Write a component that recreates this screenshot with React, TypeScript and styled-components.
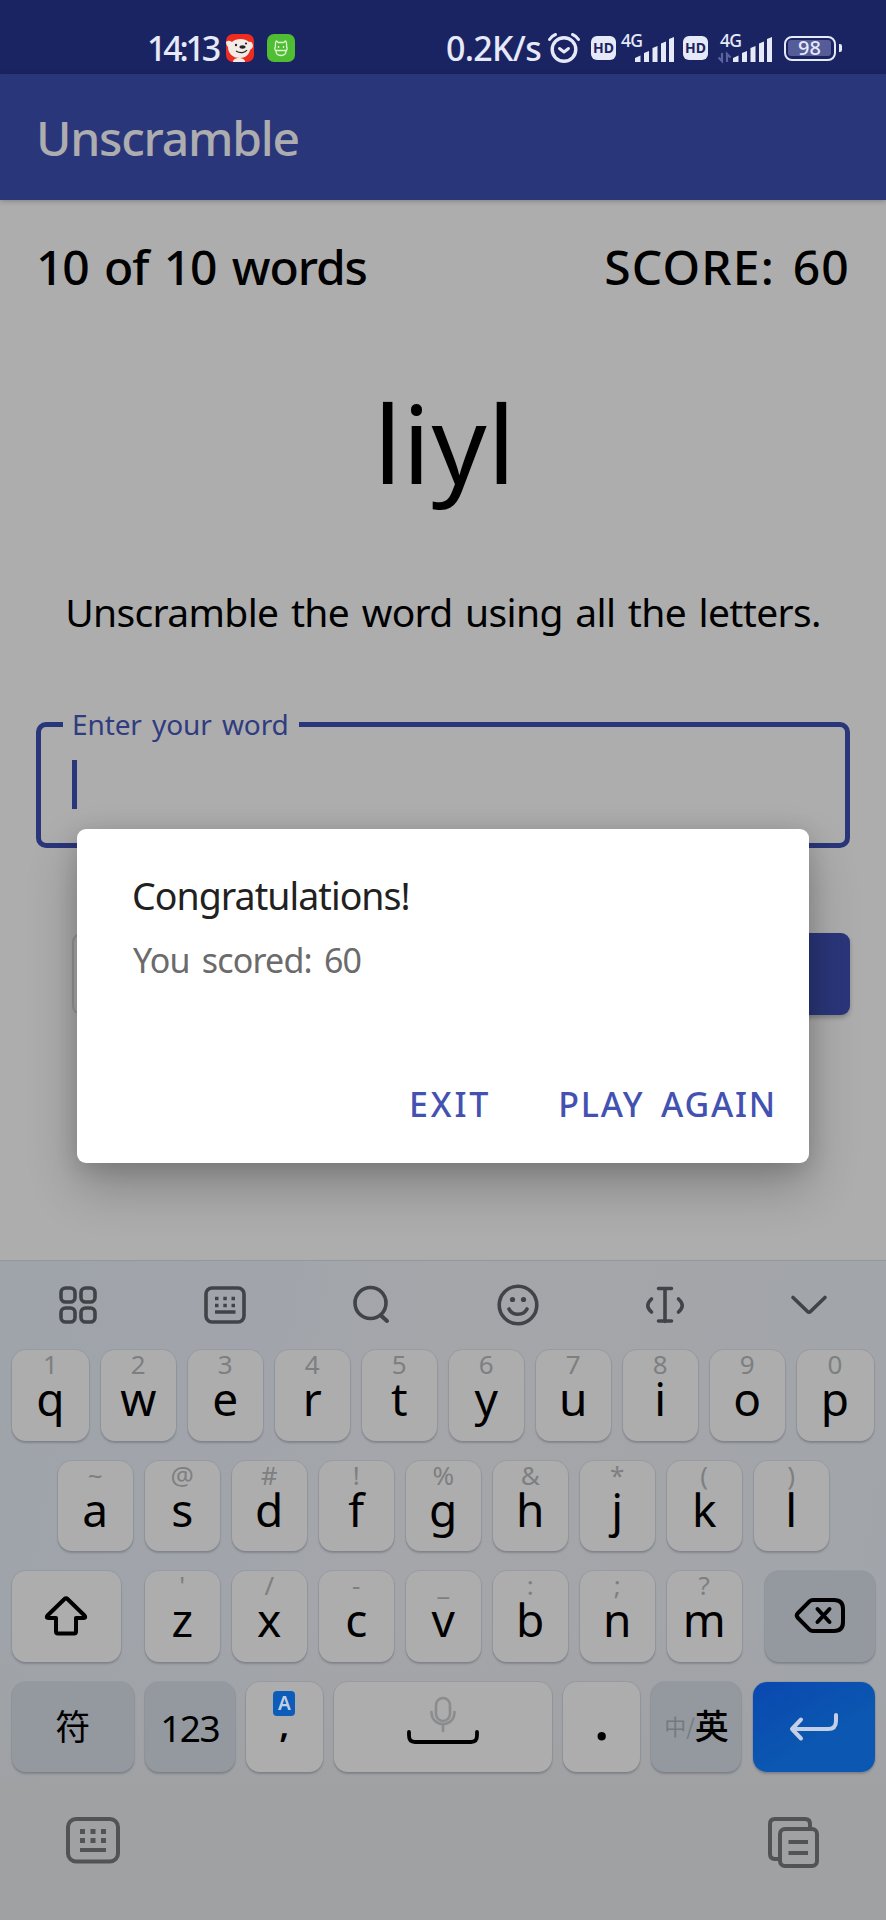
import React from 'react';
import styled, { createGlobalStyle, css } from 'styled-components';

const Global = createGlobalStyle`
  * { box-sizing: border-box; }
  body { margin: 0; background: #adadad; }
`;

const INDIGO = '#2a367a';
const FONT = `'Noto Sans', 'Noto Sans CJK SC', sans-serif`;

const Screen = styled.div`
  position: relative;
  display: flex;
  flex-direction: column;
  width: 886px;
  height: 1920px;
  overflow: hidden;
  background: #adadad;
  font-family: ${FONT};
  color: #000;
  white-space: nowrap;
`;

/* ---------- status bar ---------- */

const StatusBar = styled.header`
  display: flex;
  justify-content: space-between;
  align-items: center;
  height: 74px;
  padding: 22px 50px 0 147px;
  background: #1b2463;
  color: #e6e9f8;
`;

const StatusGroup = styled.div`
  display: flex;
  align-items: center;
`;

const Clock = styled.span`
  width: 79px;
  font-size: 34px;
  font-weight: 500;
  line-height: 50px;
  letter-spacing: -3.2px;
`;

const NetSpeed = styled.span`
  width: 102px;
  font-size: 34px;
  font-weight: 500;
  line-height: 50px;
  letter-spacing: -0.7px;
`;

const AppBadge = styled.svg`
  display: block;
  width: 28px;
  height: 28px;
  margin-right: 13px;
`;

const StatusIcon = styled.svg<{ $gap?: number }>`
  display: block;
  flex: none;
  overflow: visible;
  margin-right: ${(p) => p.$gap ?? 0}px;
`;

const HdBadge = styled.span<{ $gap: number }>`
  width: 25px;
  height: 24px;
  margin-right: ${(p) => p.$gap}px;
  border-radius: 6px;
  background: #e6e9f8;
  color: #1b2463;
  font: 700 14px/24px 'Noto Sans', sans-serif;
  text-align: center;
`;

const Battery = styled.span`
  position: relative;
  width: 52px;
  height: 25px;
  padding: 2px;
  border: 2.5px solid #e6e9f8;
  border-radius: 8px;
  &::after {
    content: '';
    position: absolute;
    right: -8px;
    top: 6px;
    width: 3px;
    height: 8px;
    border-radius: 0 2px 2px 0;
    background: #e6e9f8;
  }
`;

const BatteryLevel = styled.span`
  display: block;
  width: 43px;
  height: 16px;
  border-radius: 3px;
  background: #555c98;
  font-size: 20px;
  font-weight: 500;
  line-height: 16px;
  text-align: center;
`;

/* ---------- game ---------- */

const AppBar = styled.div`
  position: relative;
  height: 126px;
  padding-left: 36px;
  background: ${INDIGO};
  box-shadow: 0 1px 5px rgba(0, 0, 0, 0.25);
  color: #adadb0;
  font-size: 48px;
  font-weight: 500;
  line-height: 127px;
  letter-spacing: -1.2px;
`;

const Game = styled.main`
  display: flex;
  flex-direction: column;
  height: 1060px;
  padding: 0 36px;
`;

const ScoreRow = styled.div`
  display: flex;
  justify-content: space-between;
  font-size: 48px;
  font-weight: 500;
  line-height: 134px;
`;

const WordCount = styled.span`
  letter-spacing: -1.1px;
  word-spacing: 4px;
`;

const Score = styled.span`
  letter-spacing: 1.2px;
  word-spacing: 4px;
`;

const Scrambled = styled.div`
  padding-left: 4px;
  text-align: center;
  font-size: 108px;
  line-height: 218px;
  letter-spacing: 1px;
`;

const Instruction = styled.div`
  text-align: center;
  font-size: 39px;
  line-height: 119px;
  letter-spacing: -0.65px;
  word-spacing: 3px;
`;

const WordField = styled.div`
  position: relative;
  height: 126px;
  margin-top: 51px;
  padding: 33px 31px;
  border: 5px solid ${INDIGO};
  border-radius: 10px;
`;

const FieldLabel = styled.span`
  position: absolute;
  top: -18px;
  left: 22px;
  width: 236px;
  padding-left: 9px;
  background: #adadad;
  color: #303c80;
  font-size: 28px;
  line-height: 31px;
  letter-spacing: -0.1px;
  word-spacing: 3px;
`;

const Caret = styled.div`
  width: 5px;
  height: 49px;
  background: ${INDIGO};
`;

const ButtonRow = styled.div`
  display: grid;
  grid-template-columns: 1fr 1fr;
  gap: 18px;
  height: 82px;
  margin: 85px 0 0 36px;
`;

const GameButton = styled.div<{ $filled?: boolean }>`
  border-radius: 9px;
  ${(p) =>
    p.$filled
      ? css`
          background: ${INDIGO};
          box-shadow: 0 3px 4px rgba(0, 0, 0, 0.22);
        `
      : css`
          border: 2px solid #969696;
        `}
`;

/* ---------- dialog ---------- */

const Dialog = styled.section`
  position: absolute;
  top: 829px;
  left: 77px;
  display: flex;
  flex-direction: column;
  width: 732px;
  height: 334px;
  padding: 39px 32px 0 55px;
  border-radius: 9px;
  background: #fff;
  box-shadow: 0 24px 50px rgba(0, 0, 0, 0.24), 0 4px 22px rgba(0, 0, 0, 0.14);
`;

const DialogTitle = styled.h1`
  margin: 0;
  font-size: 37.5px;
  font-weight: 400;
  line-height: 56px;
  letter-spacing: -0.95px;
  color: #212121;
`;

const DialogText = styled.p`
  margin: 0;
  padding: 8px 0 0 1px;
  font-size: 34px;
  line-height: 56px;
  letter-spacing: -0.8px;
  word-spacing: 4px;
  color: #6b6b6b;
`;

const DialogActions = styled.div`
  display: flex;
  justify-content: flex-end;
  gap: 67px;
  margin-top: 86px;
`;

const DialogButton = styled.span<{ $spacing: number }>`
  font-size: 34px;
  font-weight: 500;
  line-height: 60px;
  letter-spacing: ${(p) => p.$spacing}px;
  word-spacing: 6px;
  color: #4352b0;
`;

/* ---------- keyboard ---------- */

const Keyboard = styled.section`
  display: flex;
  flex-direction: column;
  height: 660px;
  border-top: 1px solid #95989b;
  background: linear-gradient(180deg, rgba(160, 161, 163, 0) 0%, rgba(160, 161, 163, 0) 55%, #a0a1a3 82%),
    linear-gradient(100deg, #9fa4aa 0%, #a1a5ab 28%, #a5a6aa 45%, #a3a5a9 70%, #a1a5ab 100%);
`;

const Toolbar = styled.div`
  display: grid;
  grid-template-columns: repeat(6, 1fr);
  place-items: center;
  height: 87px;
  margin: 0 1px 2px 5px;
`;

const Icon = styled.svg`
  display: block;
  overflow: visible;
  fill: none;
  stroke: #404347;
  stroke-width: 3.6;
  stroke-linecap: round;
  stroke-linejoin: round;
`;

const KeyRow = styled.div<{ $left?: number; $gap?: number }>`
  display: flex;
  gap: ${(p) => p.$gap ?? 12}px;
  margin-bottom: 20px;
  padding-left: ${(p) => p.$left ?? 12}px;
`;

type Tone = 'light' | 'dark' | 'enter';

const tones: Record<Tone, string> = {
  light: '#adadad',
  dark: '#94999f',
  enter: 'linear-gradient(150deg, #0a48b0, #0b57b1 60%)',
};

const KeyCap = styled.div<{ $w?: number; $tone?: Tone; $before?: number; $after?: number }>`
  display: flex;
  flex-direction: column;
  flex: none;
  align-items: center;
  width: ${(p) => p.$w ?? 75.5}px;
  height: 90.5px;
  margin-left: ${(p) => p.$before ?? 0}px;
  margin-right: ${(p) => p.$after ?? 0}px;
  border-radius: 14px;
  background: ${(p) => tones[p.$tone ?? 'light']};
  box-shadow: 0 0 0 1px rgba(120, 125, 135, 0.22), 0 2px 2px rgba(60, 65, 75, 0.3);
`;

const IconKey = styled(KeyCap)`
  justify-content: center;
`;

const SpaceKey = styled(IconKey)`
  padding-bottom: 14px;
`;

const Hint = styled.span`
  height: 28px;
  font-size: 26px;
  line-height: 28px;
  color: #7d7f81;
`;

const Letter = styled.span`
  font-size: 46px;
  line-height: 40px;
`;

const Han = styled.span`
  font: 400 35px/86px 'Noto Sans CJK SC', sans-serif;
`;

const Digits = styled.span`
  font-size: 37px;
  line-height: 91px;
  letter-spacing: -1.5px;
`;

const CommaBadge = styled.span`
  width: 22px;
  height: 25px;
  margin-top: 9px;
  border-radius: 4px;
  background: #0d5cba;
  color: #c2cfe2;
  font-size: 19px;
  font-weight: 600;
  line-height: 25px;
  text-align: center;
`;

const Punctuation = styled.span<{ $size: number; $line: number }>`
  font-size: ${(p) => p.$size}px;
  font-weight: 600;
  line-height: ${(p) => p.$line}px;
`;

const LanguageSwitch = styled.span`
  display: flex;
  align-items: center;
  height: 86px;
  font-family: 'Noto Sans CJK SC', sans-serif;
  font-size: 34px;
  font-weight: 500;
`;

const OtherLanguage = styled.span`
  font-size: 22px;
  font-weight: 400;
  color: #75797e;
`;

const BottomBar = styled.div`
  display: flex;
  justify-content: space-between;
  margin-top: 25px;
  padding: 0 67px 0 66px;
`;

const BottomIcon = styled(Icon)`
  stroke: #525355;
  stroke-width: 4;
`;

const Key = ({ letter, hint, w }: { letter: string; hint: string; w?: number }) => (
  <KeyCap $w={w}>
    <Hint>{hint}</Hint>
    <Letter>{letter}</Letter>
  </KeyCap>
);

const pairs = (letters: string, hints: string) =>
  letters.split('').map((letter, i) => ({ letter, hint: hints[i] }));

const TOP = pairs('qwertyuiop', '1234567890');
const HOME = pairs('asdfghjkl', '~@#!%&*()');
const LOWER = pairs('zxcvbnm', "'/-_:;?");

const Signal = ({ inactive, gap }: { inactive?: boolean; gap: number }) => {
  const x = inactive ? 15 : 14;
  return (
    <StatusIcon width={x + 39} height="30" viewBox={`0 0 ${x + 39} 30`} $gap={gap}>
      <text x={inactive ? 2 : 0} y="13.5" fontSize="17.5" fontWeight="500" fontFamily="Noto Sans" letterSpacing="-0.8" fill="#e6e9f8">
        4G
      </text>
      {inactive && (
        <path d="M4 20v8l-3.5-3.5M9 29v-8l3.5 3.5M4 28v-8M9 21v8" stroke="#5b639f" strokeWidth="2.2" fill="none" />
      )}
      <g fill="#e6e9f8">
        <path d={`M${x} 25l5.500-2.500v6.500h-5.500z`} />
        <path d={`M${x + 9} 20l5-2v11h-5z`} />
        <path d={`M${x + 17.5} 15l5-2v16h-5z`} />
        <path d={`M${x + 26} 10.500l5-2v20.500h-5z`} />
        <path d={`M${x + 34} 6l5-2v25h-5z`} />
      </g>
    </StatusIcon>
  );
};

export default function App() {
  return (
    <Screen>
      <Global />
      <StatusBar>
        <StatusGroup>
          <Clock>14:13</Clock>
          <AppBadge viewBox="0 0 28 28">
            <rect width="28" height="28" rx="7" fill="#ee2d20" />
            <path d="M0 8c2-2 4-1 6 0 4-4 13-4 17 0 2-1 4 1 4 4 0 2-2 3-3 4-1 5-5 8-10 8C6 24 2 19 2 13 1 12 0 10 0 8z" fill="#f3ece6" />
            <path d="M7 28c0-3 3-4 6-4s6 1 6 4z" fill="#f3ece6" />
            <ellipse cx="16.500" cy="13" rx="3" ry="1.700" fill="#2a2023" />
            <circle cx="10" cy="11" r="1.200" fill="#2a2023" />
            <circle cx="20" cy="9.500" r="1.100" fill="#2a2023" />
            <path d="M10 17c4 2.500 9 2 11-1" stroke="#2a2023" strokeWidth="1.200" fill="none" />
          </AppBadge>
          <AppBadge viewBox="0 0 28 28">
            <rect width="28" height="28" rx="7" fill="#4fbe32" />
            <g fill="none" stroke="#dff5d8" strokeWidth="1.300">
              <path d="M8.500 12c-.5-2 .5-5 1-5s1.500 1.500 2 1.500h5c.5 0 1.500-1.500 2-1.500s1.500 3 1 5c1 2 .5 4-.5 5 0 3-2 4.500-5 4.500s-5-1.500-5-4.500c-1-1-1.500-3-.5-5zM8 16.500h12" />
              <path d="M11.500 12v2M16.500 12v2" />
            </g>
          </AppBadge>
        </StatusGroup>
        <StatusGroup>
          <NetSpeed>0.2K/s</NetSpeed>
          <StatusIcon width="32" height="30" viewBox="0 0 32 30" $gap={11}>
            <g fill="none" stroke="#e6e9f8" strokeWidth="3.400" strokeLinecap="round" strokeLinejoin="round">
              <circle cx="16" cy="16.500" r="11.800" />
              <path d="M11.500 15.500l4.500 3.500 4.500-3.500M1.500 6.500C3 4 5 2.500 7.500 1.500M30.500 6.500C29 4 27 2.500 24.500 1.500" strokeWidth="3" />
            </g>
          </StatusIcon>
          <HdBadge $gap={5}>HD</HdBadge>
          <Signal gap={9} />
          <HdBadge $gap={10}>HD</HdBadge>
          <Signal inactive gap={12} />
          <Battery>
            <BatteryLevel>98</BatteryLevel>
          </Battery>
        </StatusGroup>
      </StatusBar>
      <AppBar>Unscramble</AppBar>
      <Game>
        <ScoreRow>
          <WordCount>10 of 10 words</WordCount>
          <Score>SCORE: 60</Score>
        </ScoreRow>
        <Scrambled>liyl</Scrambled>
        <Instruction>Unscramble the word using all the letters.</Instruction>
        <WordField>
          <FieldLabel>Enter your word</FieldLabel>
          <Caret />
        </WordField>
        <ButtonRow>
          <GameButton />
          <GameButton $filled />
        </ButtonRow>
      </Game>

      <Keyboard>
        <Toolbar>
          <Icon width="38" height="38" viewBox="0 0 38 38">
            <rect x="2" y="2" width="14" height="14" rx="4.500" />
            <rect x="22" y="2" width="14" height="14" rx="4.500" />
            <rect x="2" y="22" width="14" height="14" rx="4.500" />
            <rect x="22" y="22" width="14" height="14" rx="4.500" />
          </Icon>
          <Icon width="42" height="38" viewBox="0 0 42 38">
            <rect x="2" y="2" width="38" height="34" rx="6" />
            <path d="M11 12.500h3.500M19.300 12.500h3.500M27.500 12.500h3.500M11 19.500h3.500M19.300 19.500h3.500M27.500 19.500h3.500M11 26h20.500" strokeLinecap="butt" />
          </Icon>
          <Icon width="37" height="39" viewBox="0 0 37 39">
            <circle cx="17.500" cy="18" r="15.500" />
            <path d="M28 30.500l6 5.500" strokeWidth="4" />
          </Icon>
          <Icon width="42" height="42" viewBox="0 0 42 42">
            <circle cx="21" cy="21" r="18.800" />
            <path d="M12 25c3.500 7 14.500 7 18 0" />
            <circle cx="15.500" cy="15.500" r="2.600" fill="#404347" stroke="none" />
            <circle cx="26.500" cy="15.500" r="2.600" fill="#404347" stroke="none" />
          </Icon>
          <Icon width="40" height="38" viewBox="0 0 40 38">
            <path d="M13.500 2.500h13M20 2.500v33M13.500 35h13M6.500 13c-5 4.500-5 8.500 0 13M33.500 13c5 4.500 5 8.500 0 13" />
          </Icon>
          <Icon width="36" height="18" viewBox="2 0 36 18">
            <path d="M1 1.500l14.500 14Q17 17 18.500 15.500L33 1.500" />
          </Icon>
        </Toolbar>

        <KeyRow $gap={11.5}>
          {TOP.map((k, i) => (
            <Key key={k.letter} {...k} w={i === 0 || i === 9 ? 77 : undefined} />
          ))}
        </KeyRow>
        <KeyRow $left={57.5} $gap={11.5}>
          {HOME.map((k) => (
            <Key key={k.letter} {...k} />
          ))}
        </KeyRow>
        <KeyRow $gap={11.5}>
          <IconKey $w={108.5} $after={12.5}>
            <Icon width="44" height="40" viewBox="0 0 44 40">
              <path
                d="M20.500 3Q22 1.500 23.500 3l17 16.500q2 2.500-1 2.500H32v13.500q0 2-2 2H14q-2 0-2-2V22H4.500q-3 0-1-2.500z"
                stroke="#000"
                strokeWidth="4"
              />
            </Icon>
          </IconKey>
          {LOWER.map((k) => (
            <Key key={k.letter} {...k} />
          ))}
          <IconKey $w={110} $tone="dark" $before={11}>
            <Icon width="50" height="36" viewBox="0 0 50 36">
              <g stroke="#000" strokeWidth="4">
                <path d="M18 2h21q9 0 9 9v13q0 9-9 9H18q-2 0-4-1.800L3 20q-2.500-2.500 0-5L14 3.800Q16 2 18 2z" />
                <path d="M22.500 11l12 13M34.500 11l-12 13" />
              </g>
            </Icon>
          </IconKey>
        </KeyRow>
        <KeyRow $gap={11.2}>
          <KeyCap $w={121.5} $tone="dark">
            <Han>符</Han>
          </KeyCap>
          <KeyCap $w={90} $tone="dark">
            <Digits>123</Digits>
          </KeyCap>
          <KeyCap $w={77}>
            <CommaBadge>A</CommaBadge>
            <Punctuation $size={36} $line={15}>,</Punctuation>
          </KeyCap>
          <SpaceKey $w={218}>
            <Icon width="72" height="48" viewBox="0 0 72 48">
              <g stroke="#8b8c8d" strokeWidth="2.600">
                <rect x="29" y="2" width="14" height="23" rx="7" />
                <path d="M24.500 16c0 16 23 16 23 0M36 28v7" />
              </g>
              <path d="M2 36v3.500q0 6.500 6 6.500h56q6 0 6-6.500V36" stroke="#000" strokeWidth="3.800" />
            </Icon>
          </SpaceKey>
          <KeyCap $w={77}>
            <Punctuation $size={54} $line={74}>.</Punctuation>
          </KeyCap>
          <KeyCap $w={90} $tone="dark">
            <LanguageSwitch>
              <OtherLanguage>中/</OtherLanguage>英
            </LanguageSwitch>
          </KeyCap>
          <IconKey $w={122} $tone="enter">
            <Icon width="48" height="27" viewBox="0 0 48 27">
              <g stroke="#c3cfe6" strokeWidth="4">
                <path d="M46 2v6q0 8-8 8H2M11 6.500L2 16l9 9.500" />
              </g>
            </Icon>
          </IconKey>
        </KeyRow>

        <BottomBar>
          <BottomIcon width="54" height="47" viewBox="0 0 54 47">
            <rect x="2" y="2" width="50" height="42.500" rx="8" />
            <path d="M14 14.500h5M24.500 14.500h5M35 14.500h5M14 23.500h5M24.500 23.500h5M35 23.500h5" strokeLinecap="butt" strokeWidth="5" />
            <path d="M14 33h26" strokeLinecap="butt" />
          </BottomIcon>
          <BottomIcon width="51" height="51" viewBox="0 0 51 51">
            <path d="M42 11V7q0-5-5-5H7Q2 2 2 7v30q0 5 5 5h4" />
            <rect x="12" y="12" width="37" height="37" rx="5" />
            <path d="M20.500 25h19.500M20.500 36h19.500" strokeLinecap="butt" />
          </BottomIcon>
        </BottomBar>
      </Keyboard>

      <Dialog>
        <DialogTitle>Congratulations!</DialogTitle>
        <DialogText>You scored: 60</DialogText>
        <DialogActions>
          <DialogButton $spacing={2.8}>EXIT</DialogButton>
          <DialogButton $spacing={1.8}>PLAY AGAIN</DialogButton>
        </DialogActions>
      </Dialog>
    </Screen>
  );
}
